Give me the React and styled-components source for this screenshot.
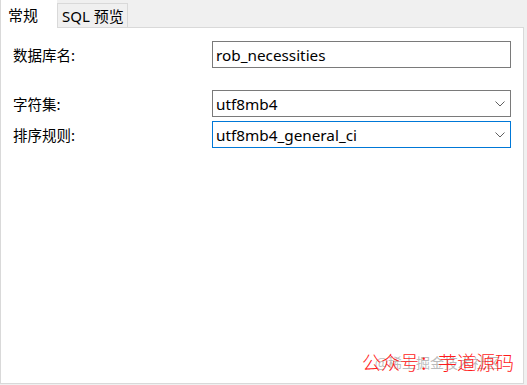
import React from 'react'
import styled, { createGlobalStyle } from 'styled-components'

const Global = createGlobalStyle`
  html, body {
    margin: 0;
    padding: 0;
    background: #f0f0f0;
  }
  body {
    width: 527px;
    height: 385px;
    overflow: hidden;
    font-family: "Noto Sans", "Noto Sans CJK SC", sans-serif;
  }
`

const Window = styled.div`
  width: 527px;
  height: 385px;
  display: flex;
  flex-direction: column;
  position: relative;
`

const TabBar = styled.div`
  display: flex;
  align-items: flex-end;
  height: 27px;
  flex-shrink: 0;
`

const Tab = styled.div`
  box-sizing: border-box;
  display: flex;
  align-items: center;
  font-size: 15px;
  color: #000;
  font-family: "Noto Sans", "Noto Sans CJK SC", sans-serif;
  ${p => p.active ? `
    width: 57px;
    height: 28px;
    margin-bottom: -1px;
    padding-left: 7px;
    background: #fff;
    border-left: 1px solid #d9d9d9;
    position: relative;
    z-index: 1;
  ` : `
    width: 71px;
    height: 24px;
    padding-left: 4px;
    background: #f0f0f0;
    border: 1px solid #d9d9d9;
    border-bottom: none;
  `}
`

const Panel = styled.div`
  box-sizing: border-box;
  width: 524px;
  height: 357px;
  background: #fff;
  border: 1px solid #d9d9d9;
  padding: 13px 12px 0 12px;
`

const Form = styled.div`
  display: grid;
  grid-template-columns: 199px 299px;
  row-gap: 4px;
`

const Label = styled.div`
  display: flex;
  align-items: center;
  height: 27px;
  font-size: 14.5px;
  font-family: "Noto Sans CJK SC", sans-serif;
  color: #000;
  margin-top: ${p => p.spaced ? '18px' : '0'};
`

const Field = styled.div`
  box-sizing: border-box;
  height: 27px;
  display: flex;
  align-items: center;
  justify-content: space-between;
  border: 1px solid ${p => p.focused ? '#0078d7' : '#7a7a7a'};
  padding: 0 5px 0 3px;
  font-size: 15.3px;
  font-family: "Noto Sans", sans-serif;
  color: #000;
  margin-top: ${p => p.spaced ? '18px' : '0'};
`

const Chevron = () => (
  <svg width="10" height="6" viewBox="0 0 10 6">
    <path d="M0.5 0.5 L5 5 L9.5 0.5" fill="none" stroke="#606060" strokeWidth="1" />
  </svg>
)

const Watermark = styled.div`
  position: absolute;
  right: 13px;
  bottom: 9px;
  width: 160px;
  height: 28px;
`

const WatermarkGray = styled.div`
  position: absolute;
  right: 14px;
  top: 4px;
  font-size: 14px;
  color: rgba(120, 120, 120, 0.5);
  font-family: "Noto Sans CJK SC", sans-serif;
  white-space: nowrap;
`

const WatermarkRed = styled.div`
  position: absolute;
  right: 0;
  top: 0;
  font-size: 19px;
  color: #ff1a1a;
  font-weight: 300;
  font-family: "Noto Sans CJK SC", sans-serif;
  white-space: nowrap;
  line-height: 28px;
`

export default function App() {
  return (
    <Window>
      <Global />
      <TabBar>
        <Tab active>常规</Tab>
        <Tab>SQL 预览</Tab>
      </TabBar>
      <Panel>
        <Form>
          <Label>数据库名:</Label>
          <Field>rob_necessities</Field>
          <Label spaced>字符集:</Label>
          <Field spaced>utf8mb4<Chevron /></Field>
          <Label>排序规则:</Label>
          <Field focused>utf8mb4_general_ci<Chevron /></Field>
        </Form>
      </Panel>
      <Watermark>
        <WatermarkGray>@稀土掘金技术社区</WatermarkGray>
        <WatermarkRed>公众号：芋道源码</WatermarkRed>
      </Watermark>
    </Window>
  )
}
